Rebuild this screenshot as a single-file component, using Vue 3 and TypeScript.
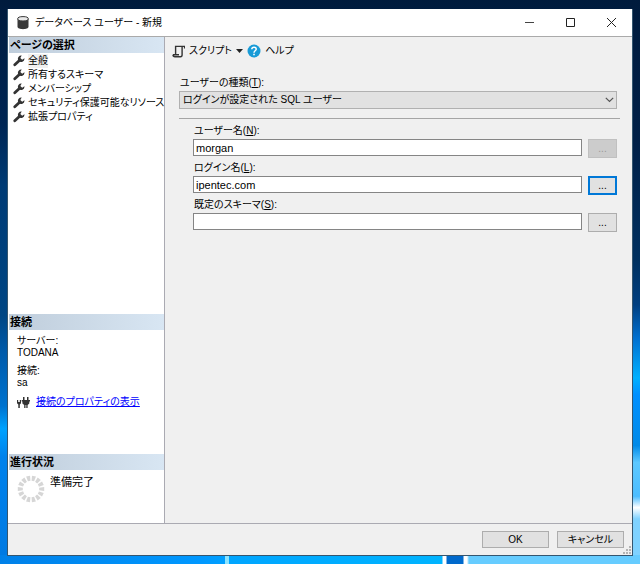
<script setup lang="ts">
import { ref } from 'vue'

interface Field {
  id: string
  label: string
  key: string
  value: string
  state: string
}

const pages: string[] = ['全般', '所有するスキーマ', 'メンバーシップ', 'セキュリティ保護可能なリソース', '拡張プロパティ']
const selected = ref(0)
const userType = ref('ログインが設定された SQL ユーザー')
const fields = ref<Field[]>([
  { id: 'user', label: 'ユーザー名', key: 'N', value: 'morgan', state: 'disabled' },
  { id: 'login', label: 'ログイン名', key: 'L', value: 'ipentec.com', state: 'focused' },
  { id: 'schema', label: '既定のスキーマ', key: 'S', value: '', state: 'normal' },
])
const spokes = Array.from({ length: 14 }, (_, i) => (i * 360) / 14 + 13)
</script>

<template>
  <div class="desktop">
    <main class="dialog">
      <header class="titlebar">
        <svg class="db" width="12" height="14" viewBox="0 0 12 14">
          <path d="M.5 2.8v8C.5 14 11.5 14 11.5 10.8v-8z" fill="#383838" />
          <ellipse cx="6" cy="2.8" rx="5.3" ry="2.2" fill="#e8e8e8" stroke="#383838" />
        </svg>
        <h1>データベース ユーザー - 新規</h1>
        <button class="caption" type="button" aria-label="最小化">
          <svg width="11" height="11" viewBox="0 0 11 11"><path d="M1 5.5h9" stroke="#444" fill="none" /></svg>
        </button>
        <button class="caption" type="button" aria-label="最大化">
          <svg width="11" height="11" viewBox="0 0 11 11"><path d="M1.5 1.5h8v8h-8z" stroke="#222" fill="none" /></svg>
        </button>
        <button class="caption" type="button" aria-label="閉じる">
          <svg width="11" height="11" viewBox="0 0 11 11"><path d="M1 1l9 9M10 1l-9 9" stroke="#222" fill="none" /></svg>
        </button>
      </header>

      <div class="body">
        <aside class="side">
          <section class="panel grow">
            <h2>ページの選択</h2>
            <nav class="pages">
              <button
                v-for="(page, i) in pages"
                :key="page"
                type="button"
                class="page"
                @click="selected = i"
              >
                <svg width="12" height="12" viewBox="0 0 12 12">
                  <path d="M1.8 9.8L6.6 5.3" stroke="#333" stroke-width="2.8" stroke-linecap="round" />
                  <path d="M8.7.6A3.3 3.3 0 0 0 5.1 5 3.3 3.3 0 0 0 11.4 3.2L9.2 4.8 7.3 3.1z" fill="#333" />
                </svg>
                <span :class="{ current: selected === i }">{{ page }}</span>
              </button>
            </nav>
          </section>

          <section class="panel connection">
            <h2>接続</h2>
            <dl>
              <dt>サーバー:</dt>
              <dd>TODANA</dd>
              <dt>接続:</dt>
              <dd>sa</dd>
            </dl>
            <div class="props">
              <svg width="13" height="13" viewBox="0 0 13 13" fill="#333">
                <path d="M0 4h1.2v2h1.6V4H4v3.3L2.8 8.6V12H1.3V8.6L0 7.3z" />
                <path d="M6 1h1.5v3H10V1h1.5v3H13v1.5h-.7v2L10.6 9v3H9.3V9h-.8v3H7.2V9L5.4 7.5v-2h-.7V4H6z" />
              </svg>
              <a href="#connection">接続のプロパティの表示</a>
            </div>
          </section>

          <section class="panel progress">
            <h2>進行状況</h2>
            <div class="status">
              <svg width="28" height="28" viewBox="0 0 28 28">
                <path
                  v-for="angle in spokes"
                  :key="angle"
                  d="M12 .8h4l-.7 5h-2.6z"
                  fill="#d6d6d6"
                  :transform="`rotate(${angle} 14 14)`"
                />
              </svg>
              <span>準備完了</span>
            </div>
          </section>
        </aside>

        <section class="content">
          <div class="toolbar">
            <button type="button" class="tool">
              <svg width="13" height="13" viewBox="0 0 13 13" fill="none" stroke="#333" stroke-width="1.4">
                <path d="M12.6 3.6V1.4H3.6v9.2M1 9.8h6M1 9.8c0 2 1 2 2 2h5.5c1.4 0 1.6-.8 1.6-2V1.4" />
              </svg>
              <span>スクリプト</span>
              <svg width="7" height="4" viewBox="0 0 7 4"><path d="M0 0h7L3.5 4z" fill="#222" /></svg>
            </button>
            <button type="button" class="tool">
              <svg width="14" height="14" viewBox="0 0 14 14">
                <circle cx="7" cy="7" r="6.5" fill="#189bd7" />
                <path d="M4.8 5.3C4.8 2.4 9.3 2.5 9.2 5.2 9.1 6.8 7 6.8 7 8.7" fill="none" stroke="#fff" stroke-width="1.5" />
                <path d="M6.2 9.7h1.6v1.5H6.2z" fill="#fff" />
              </svg>
              <span>ヘルプ</span>
            </button>
          </div>

          <form class="form" @submit.prevent>
            <label for="type">ユーザーの種類(<u>T</u>):</label>
            <div class="select">
              <select id="type" v-model="userType">
                <option>ログインが設定された SQL ユーザー</option>
              </select>
              <svg width="9" height="6" viewBox="0 0 9 6"><path d="M.8.8L4.5 4.5 8.2.8" fill="none" stroke="#555" stroke-width="1.2" /></svg>
            </div>
            <hr />
            <div class="fields">
              <div v-for="field in fields" :key="field.id" class="field">
                <label :for="field.id">{{ field.label }}(<u>{{ field.key }}</u>):</label>
                <div class="entry">
                  <input :id="field.id" v-model="field.value" type="text" spellcheck="false" />
                  <button
                    type="button"
                    class="browse"
                    :class="field.state"
                    :disabled="field.state === 'disabled'"
                  >
                    ...
                  </button>
                </div>
              </div>
            </div>
          </form>
        </section>
      </div>

      <footer class="footer">
        <button type="button">OK</button>
        <button type="button">キャンセル</button>
        <svg class="grip" width="8" height="8" viewBox="0 0 8 8" fill="#b4b4b4">
          <path d="M6 0h2v2H6zM3 3h2v2H3zM6 3h2v2H6zM0 6h2v2H0zM3 6h2v2H3zM6 6h2v2H6z" />
        </svg>
      </footer>
    </main>
  </div>
</template>

<style>
body {
  margin: 0;
}
</style>

<style scoped>
.desktop {
  box-sizing: border-box;
  min-height: 100vh;
  display: flex;
  padding: 9px 7px 8px;
  color: #000;
  font: 10px/14px "Liberation Sans", "Noto Sans CJK JP", sans-serif;
  font-feature-settings: "palt";
  background:
    linear-gradient(90deg, #0080e8 0, #0098ff 200px, #00a0ff 225px, #8ce4ff 225px 229px, #00a5ff 229px, #00b4ff 442px, #fff 443px 446px, #0069cc 447px 463px, #fff 464px 467px, #6cf 469px) bottom / 100% 9px no-repeat,
    linear-gradient(#001b3d 0, #002048 25%, #00305f 46%, #003f80 54%, #0070d0 60%, #00b0ff 67%, #0090ff 70%, #008ae8 79%, #5cc8ff 82%, #4cbdff 88%, #fff 90%, #7fd2ff 92%) right / 8px 100% no-repeat,
    linear-gradient(#001b3d 0, #002654 22%, #003b75 33%, #004684 56%, #0059a8 62%, #0073cf 72%, #00a2ff 76%, #0082ec 81%, #0079e2 100%);
}
button,
input,
select {
  font: inherit;
  font-feature-settings: inherit;
  color: inherit;
  margin: 0;
  box-sizing: border-box;
}
svg {
  flex: none;
}
.dialog {
  flex: 1;
  display: flex;
  flex-direction: column;
  min-width: 0;
  background: #f0f0f0;
  border: 1px solid #35566f;
  border-top: 0;
}
.titlebar {
  display: flex;
  align-items: center;
  height: 27px;
  padding-left: 9px;
  background: #fff;
  border-bottom: 1px solid #aaa;
}
.titlebar h1 {
  flex: 1;
  margin: 0 0 0 6px;
  font-size: 10px;
  font-weight: 400;
}
.caption {
  display: flex;
  align-items: center;
  justify-content: center;
  width: 41px;
  height: 26px;
  padding: 0;
  border: 0;
  background: none;
}
.body {
  flex: 1;
  display: flex;
}
.side {
  width: 155px;
  flex: none;
  display: flex;
  flex-direction: column;
  padding-left: 1px;
  background: #fff;
  border-right: 1px solid #aaaab2;
}
.grow {
  flex: 1;
}
.panel h2 {
  margin: 0;
  padding-left: 1px;
  font-size: 11px;
  line-height: 16px;
  font-weight: 700;
  background: linear-gradient(90deg, #bfcddb, #d8e6f3);
}
.pages {
  display: flex;
  flex-direction: column;
  padding-top: 1px;
}
.page {
  display: flex;
  align-items: center;
  gap: 3px;
  padding: 0 0 0 4px;
  border: 0;
  background: none;
  white-space: nowrap;
}
.current {
  background: #f0f0f0;
}
.connection {
  height: 140px;
}
.connection dl {
  margin: 5px 0 0 8px;
  line-height: 12px;
}
.connection dd {
  margin: 0 0 6px;
}
.props {
  display: flex;
  align-items: center;
  gap: 6px;
  padding-left: 8px;
}
.props a {
  color: #00f;
}
.progress {
  height: 69px;
}
.status {
  display: flex;
  gap: 5px;
  padding: 5px 0 0 8px;
  font-size: 11px;
}
.content {
  flex: 1;
  min-width: 0;
  padding: 7px 15px 0 14px;
}
.toolbar {
  display: flex;
  gap: 4px;
  margin-left: -7px;
}
.tool {
  display: flex;
  align-items: center;
  gap: 4px;
  height: 14px;
  padding: 0;
  border: 0;
  background: none;
}
.form {
  padding-top: 18px;
}
label {
  display: block;
  padding-left: 1px;
}
.select {
  display: grid;
  align-items: center;
  margin-top: 1px;
}
.select > * {
  grid-area: 1 / 1;
}
.select select {
  appearance: none;
  width: 100%;
  height: 18px;
  padding: 0 20px 0 3px;
  border: 1px solid #b0b0b0;
  border-radius: 0;
  background: #e1e1e1;
  line-height: 16px;
}
.select svg {
  justify-self: end;
  margin-right: 3px;
  pointer-events: none;
}
hr {
  height: 1px;
  margin: 9px -3px 5px 0;
  border: 0;
  background: #a5a5a5;
}
.fields {
  display: grid;
  gap: 3px;
  padding-left: 14px;
}
.entry {
  display: flex;
  gap: 6px;
  margin-top: 1px;
}
.entry input {
  flex: 1;
  min-width: 0;
  height: 17px;
  padding: 0 2px;
  border: 1px solid #858585;
  background: #fff;
  outline: 0;
  font-size: 11px;
}
.browse,
.footer button {
  border: 1px solid #adadad;
  padding: 0;
  background: #e1e1e1;
}
.browse {
  width: 29px;
  height: 19px;
}
.browse.disabled {
  background: #ccc;
  border-color: #c0c0c0;
  color: #999;
}
.browse.focused {
  border: 2px solid #0078d7;
}
.footer {
  position: relative;
  display: flex;
  justify-content: flex-end;
  gap: 8px;
  padding: 7px 8px;
  border-top: 1px solid #aaaab2;
}
.footer button {
  width: 67px;
  height: 17px;
  line-height: 15px;
}
.grip {
  position: absolute;
  right: 1px;
  bottom: 1px;
}
</style>
